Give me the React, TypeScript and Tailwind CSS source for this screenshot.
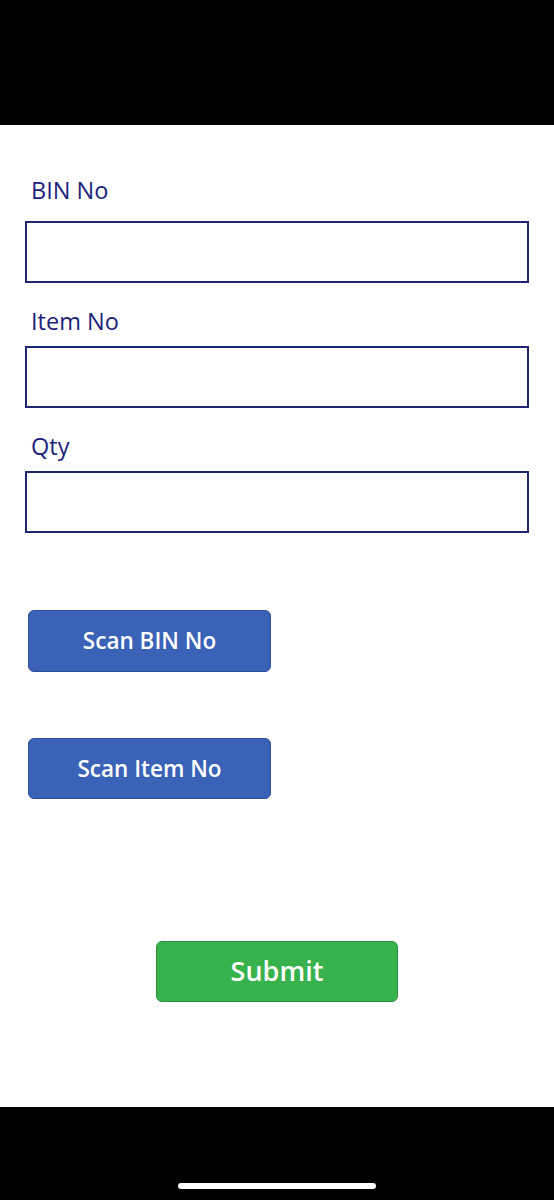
import React from "react";

function Label({ text, className }: { text: string; className: string }) {
  return (
    <div className={`ml-[31px] text-[23.5px] leading-[30px] text-[#1b237a] ${className}`}>{text}</div>
  );
}

function Field({ className }: { className: string }) {
  return (
    <input
      type="text"
      className={`ml-[25px] w-[504px] h-[62px] border-2 border-[#1e2672] bg-white outline-none ${className}`}
    />
  );
}

export default function App() {
  return (
    <div className="w-[554px] h-[1200px] flex flex-col bg-black" style={{ fontFamily: '"Open Sans", "Noto Sans", sans-serif' }}>
      <div className="h-[125px] bg-black shrink-0" />
      <div className="h-[982px] bg-white flex flex-col shrink-0">
        <Label text="BIN No" className="mt-[50px]" />
        <Field className="mt-[16px]" />
        <Label text="Item No" className="mt-[23px]" />
        <Field className="mt-[10px]" />
        <Label text="Qty" className="mt-[23px]" />
        <Field className="mt-[10px]" />
        <button className="ml-[28px] mt-[77px] w-[243px] h-[62px] rounded-[6px] bg-[#3a62b6] border border-[#2d4f9a] text-white text-[22.5px] font-semibold flex items-center justify-center">
          Scan BIN No
        </button>
        <button className="ml-[28px] mt-[66px] w-[243px] h-[61px] rounded-[6px] bg-[#3a62b6] border border-[#2d4f9a] text-white text-[22.5px] font-semibold flex items-center justify-center">
          Scan Item No
        </button>
        <button className="ml-[156px] mt-[142px] w-[242px] h-[61px] rounded-[6px] bg-[#38b24c] border border-[#2e8c3e] text-white text-[27px] font-semibold flex items-center justify-center">
          Submit
        </button>
      </div>
      <div className="h-[93px] bg-black flex items-end justify-center pb-[11px] shrink-0">
        <div className="w-[198px] h-[6px] rounded-full bg-white" />
      </div>
    </div>
  );
}
